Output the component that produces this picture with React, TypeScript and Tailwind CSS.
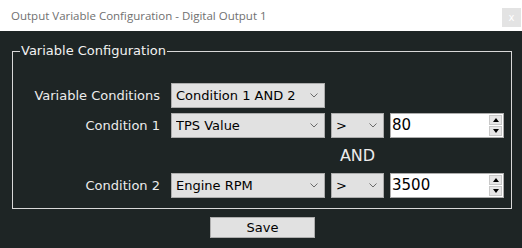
import React from 'react';

const gothic = { fontFamily: '"DejaVu Sans", "Noto Sans", sans-serif' };

const Chevron = () => (
  <svg width="8" height="5" viewBox="0 0 8 5" className="shrink-0">
    <path d="M0.5 0.5 L4 4 L7.5 0.5" fill="none" stroke="#6b6b6b" strokeWidth="1" />
  </svg>
);

const Combo = ({ value, width }: { value: string; width: string }) => (
  <div
    className={`${width} h-[25px] bg-[#e1e1e1] border border-[#adadad] flex items-center justify-between pl-[4px] pr-[6px] text-[13px] text-black`}
  >
    <span className="truncate">{value}</span>
    <Chevron />
  </div>
);

const Spinner = ({ value }: { value: string }) => (
  <div className="w-[114px] h-[25px] bg-white border border-[#adadad] flex items-stretch">
    <span className="flex-1 flex items-center pl-[1px] text-[15px] text-black">{value}</span>
    <div className="w-[13px] my-[1px] mr-[1px] flex flex-col gap-[1px]">
      <div className="flex-1 bg-[#e6e6e6] border border-[#c8c8c8] flex items-center justify-center">
        <svg width="6" height="4" viewBox="0 0 6 4"><path d="M0 4 L3 0 L6 4 Z" fill="#000" /></svg>
      </div>
      <div className="flex-1 bg-[#e6e6e6] border border-[#c8c8c8] flex items-center justify-center">
        <svg width="6" height="4" viewBox="0 0 6 4"><path d="M0 0 L6 0 L3 4 Z" fill="#000" /></svg>
      </div>
    </div>
  </div>
);

const Row = ({ label, children }: { label: string; children: React.ReactNode }) => (
  <div className="flex items-center h-[25px]">
    <span className="w-[147px] text-right text-[13px] text-[#ececec]">{label}</span>
    <div className="ml-[11px] flex items-center gap-[6px]">{children}</div>
  </div>
);

export default function App() {
  return (
    <div className="w-[522px] h-[248px] bg-[#1e2525] flex flex-col overflow-hidden" style={gothic}>
      {/* Title bar */}
      <div className="h-[31px] bg-white flex items-start justify-between pl-[11px] pr-[1px] shrink-0">
        <span
          className="mt-[7px] text-[11.5px] text-[#707070]"
          style={{ fontFamily: '"Open Sans", "Noto Sans", sans-serif' }}
        >
          Output Variable Configuration - Digital Output 1
        </span>
        <div className="mt-[8px] w-[19px] h-[19px] bg-[#e3e3e3] flex items-center justify-center text-white text-[10px] leading-none">
          x
        </div>
      </div>

      {/* Body */}
      <div className="px-[12px] pt-[11px]">
        <fieldset className="w-[500px] h-[167px] border border-[#d9d9d9] px-0">
          <legend className="ml-[7px] px-[1px] text-[13px] text-[#f2f2f2] leading-[18px]">
            Variable Configuration
          </legend>
          <div className="flex flex-col pt-[23px]">
            <Row label="Variable Conditions">
              <Combo value="Condition 1 AND 2" width="w-[154px]" />
            </Row>
            <div className="mt-[5px]">
              <Row label="Condition 1">
                <Combo value="TPS Value" width="w-[154px]" />
                <Combo value=">" width="w-[53px]" />
                <Spinner value="80" />
              </Row>
            </div>
            <div className="h-[35px] flex items-center pl-[318px]">
              <span className="w-[53px] text-center text-[16px] text-[#ececec]">AND</span>
            </div>
            <Row label="Condition 2">
              <Combo value="Engine RPM" width="w-[154px]" />
              <Combo value=">" width="w-[53px]" />
              <Spinner value="3500" />
            </Row>
          </div>
        </fieldset>
      </div>

      {/* Save */}
      <div className="pl-[210px] pt-[8px]">
        <button className="w-[105px] h-[21px] bg-[#e1e1e1] border border-[#adadad] text-[13px] text-black flex items-center justify-center">
          Save
        </button>
      </div>
    </div>
  );
}
